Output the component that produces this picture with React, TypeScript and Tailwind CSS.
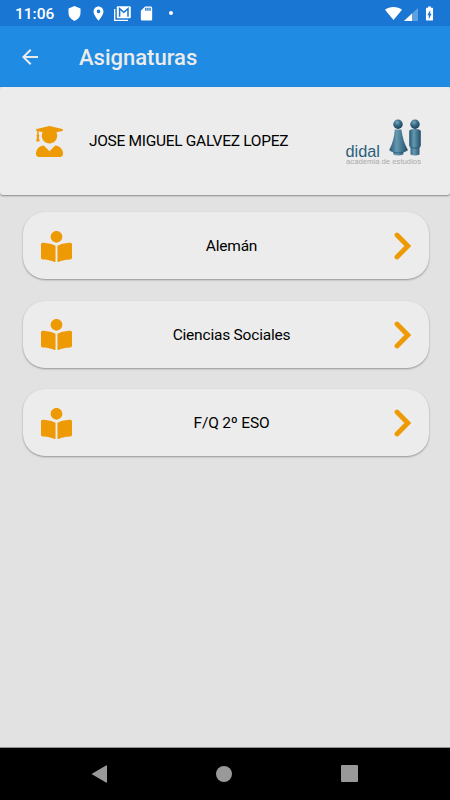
import { FaBookReader } from 'react-icons/fa';
import { MdArrowBack, MdBatteryChargingFull, MdLocationOn, MdSdCard, MdShield } from 'react-icons/md';

const subjects = ['Alemán', 'Ciencias Sociales', 'F/Q 2º ESO'];

function GmailIcon() {
  return (
    <svg width="17" height="15" viewBox="0 0 17 15" fill="none">
      <path d="M0.7 3v11.300h13.300" stroke="white" strokeWidth="1.3" />
      <rect x="2.800" y="0.200" width="14" height="12" rx="1" fill="white" />
      <path d="M5.600 10.800V2.600l4.200 3.700L14 2.600v8.200" stroke="#1976d2" strokeWidth="1.500" />
    </svg>
  );
}

function StatusBar() {
  return (
    <div className="flex h-[26px] items-center bg-[#1976d2] pl-[15px] pr-4 text-white">
      <span className="w-[52px] pt-[2px] text-[15.5px] font-medium leading-6">11:06</span>
      <svg className="mr-[2px] ml-px" width="13" height="15" viewBox="0 0 13 15" fill="currentColor">
        <path d="M6.500 0L12.500 2.500v4.500c0 3.500-2.500 6.500-6 8-3.500-1.500-6-4.500-6-8V2.500z" />
      </svg>
      <MdLocationOn className="ml-[7px] h-[17px] w-[17px]" />
      <span className="ml-[7px]">
        <GmailIcon />
      </span>
      <MdSdCard className="ml-[7px] h-[17px] w-[17px]" />
      <span className="ml-[14px] h-1 w-1 rounded-full bg-white" />
      <div className="ml-auto flex items-center">
        <svg width="17" height="13" viewBox="0 0 17 13" fill="currentColor">
          <path d="M8.5 13L0 2.8C2.4 1 5.2 0 8.5 0S14.6 1 17 2.8z" />
        </svg>
        <svg className="ml-[2px] mt-[2px]" width="14" height="13" viewBox="0 0 14 13" fill="currentColor">
          <path d="M14 0v13H0z" opacity="0.3" />
          <path d="M8 5.57V13H0z" />
        </svg>
        <MdBatteryChargingFull className="-mr-1 ml-[3px] h-[17px] w-[17px]" />
      </div>
    </div>
  );
}

function StudentIcon() {
  return (
    <svg width="27" height="31" viewBox="0 0 448 512" fill="#ed9a04">
      <path d="M319.4 320.6L224 416l-95.4-95.4C57.1 323.7 0 382.2 0 454.4v9.6c0 26.5 21.5 48 48 48h352c26.5 0 48-21.5 48-48v-9.6c0-72.2-57.1-130.7-128.6-133.8zM13.6 79.8l6.4 1.5v58.4c-7 4.2-12 11.5-12 20.3 0 8.4 4.6 15.4 11.1 19.7L3.5 242c-1.7 6.9 2.1 14 7.6 14h41.8c5.5 0 9.3-7.1 7.6-14l-15.6-62.3C51.4 175.4 56 168.4 56 160c0-8.8-5-16.1-12-20.3V87.1l66 15.9c-8.6 17.2-14 36.4-14 57 0 70.7 57.3 128 128 128s128-57.3 128-128c0-20.6-5.3-39.8-14-57l96.3-23.2c18.2-4.4 18.2-27.1 0-31.5l-190.4-46c-13-3.1-26.7-3.1-39.7 0L13.6 48.2c-18.1 4.4-18.1 27.2 0 31.6z" />
    </svg>
  );
}

function DidalLogo() {
  return (
    <svg width="78" height="50" viewBox="0 0 78 50">
      <defs>
        <linearGradient id="body" x1="0" x2="1" y1="0" y2="0">
          <stop offset="0" stopColor="#285772" />
          <stop offset="0.4" stopColor="#6499b2" />
          <stop offset="1" stopColor="#214c66" />
        </linearGradient>
        <radialGradient id="head" cx="0.4" cy="0.3" r="0.7">
          <stop offset="0" stopColor="#79a7bb" />
          <stop offset="0.5" stopColor="#356a85" />
          <stop offset="1" stopColor="#1d435c" />
        </radialGradient>
      </defs>
      <path d="M49.8 13.5h6.6c1 8 3.2 15 6.5 20.5-1.3 1.5-3 2-4.5 2.3V38.5c-3 1.3-7 1.3-10 0v-2.2c-1.7-.3-3.2-1-4.2-2.3 3.3-6.5 5-12.5 5.6-20.5z" fill="url(#body)" />
      <path d="M64.2 15.5c0-3.2 11.6-3.2 11.6 0V30l-1.3 1.5v7c-2.5 1.2-6.5 1.2-9 0v-7L64.2 30z" fill="url(#body)" />
      <path d="M48.4 36.3c3 .8 7 .8 10 0M65.5 31.5c3 .8 6 .8 9 0" fill="none" stroke="#234e66" strokeWidth="0.7" />
      <circle cx="53" cy="8.2" r="4.7" fill="url(#head)" />
      <circle cx="70" cy="8.2" r="4.7" fill="url(#head)" />
      <text x="0.5" y="40.5" textLength="34.5" lengthAdjust="spacingAndGlyphs" fill="#2c5f7c" fontFamily="Liberation Sans, Arial, sans-serif" fontSize="16">
        didal
      </text>
      <text x="1" y="47.5" textLength="75" lengthAdjust="spacingAndGlyphs" fill="#aaa" fontFamily="Liberation Sans, Arial, sans-serif" fontSize="8">
        academia de estudios
      </text>
    </svg>
  );
}

function SubjectCard({ name }: { name: string }) {
  return (
    <button className="flex h-[67px] w-full items-center rounded-[22px] bg-[#ececec] pl-[18px] pr-[18px] shadow-[0_1px_2px_rgba(0,0,0,0.35)]">
      <FaBookReader className="mt-px h-[31px] w-[31px] text-[#ed9a04]" />
      <span className="flex-1 pl-[7px] pr-[10px] pt-px text-center text-[15.5px] leading-6 tracking-[-0.2px] text-black">{name}</span>
      <svg className="mt-px" width="17" height="28" viewBox="0 0 17 28" fill="none" stroke="#ed9a04" strokeWidth="4.8" strokeLinecap="round">
        <path d="M3 3l10.8 11L3 25" />
      </svg>
    </button>
  );
}

export default function App() {
  return (
    <div className="flex h-[800px] w-[450px] flex-col overflow-hidden bg-[#e2e2e2] font-[Roboto,sans-serif]">
      <StatusBar />
      <header className="flex h-[61px] items-center bg-[#208be2] pl-[18px] text-[#ececec]">
        <MdArrowBack className="h-6 w-6" />
        <h1 className="ml-[37px] pt-[3px] text-[22px] font-medium leading-8">Asignaturas</h1>
      </header>
      <section className="flex h-[108px] items-center rounded-[3px] bg-[#ececec] pl-[36px] pr-[27px] shadow-[0_1px_2px_rgba(0,0,0,0.4)]">
        <StudentIcon />
        <span className="ml-[26px] flex-1 text-[15.5px] leading-6 tracking-[-0.3px] text-black">JOSE MIGUEL GALVEZ LOPEZ</span>
        <DidalLogo />
      </section>
      <main className="flex flex-1 flex-col gap-[21.5px] pl-[23px] pr-[21px] pt-[17px]">
        {subjects.map((name) => (
          <SubjectCard key={name} name={name} />
        ))}
      </main>
      <nav className="flex h-[53px] items-center justify-between border-t border-[#929292] bg-black pb-px pl-[91px] pr-[92px] text-[#999]">
        <svg width="16" height="18" viewBox="0 0 16 18" fill="currentColor">
          <path d="M0.5 9L15 0.5Q16 0 16 1v16q0 1-1 0.5z" />
        </svg>
        <span className="h-4 w-4 rounded-full bg-[#999]" />
        <span className="h-[17px] w-[17px] rounded-[1px] bg-[#999]" />
      </nav>
    </div>
  );
}
